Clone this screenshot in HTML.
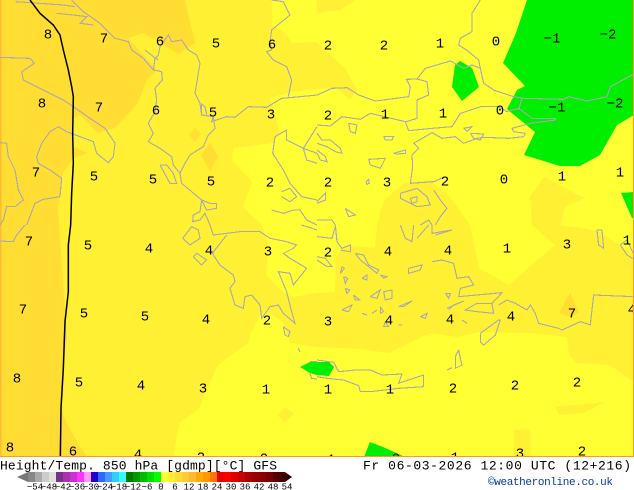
<!DOCTYPE html>
<html><head><meta charset="utf-8"><style>
html,body{margin:0;padding:0;background:#fff;width:634px;height:490px;overflow:hidden}
svg{position:absolute;left:0;top:0}
.c polyline{fill:none;stroke:#a9a9b2;stroke-width:3.3;stroke-linejoin:miter}
.l text{font:14px "Liberation Mono",monospace;text-anchor:middle;fill:#000}
.b text{font:9px "Liberation Mono",monospace;text-anchor:middle;fill:#000}
</style></head><body>
<svg width="634" height="490" viewBox="0 0 634 490" xmlns="http://www.w3.org/2000/svg">
<defs><clipPath id="m"><rect x="0" y="0" width="634" height="457"/></clipPath></defs>
<g clip-path="url(#m)">
<rect width="634" height="457" fill="#ffff33"/>
<polygon fill="#fff033" points="0,0 272,0 272,25 285,33 292,43 317,42 330,55 345,68 357,90 350,100 337,88 317,89 290,92 270,98 280,133 273,143 233,148 232,160 252,182 243,207 262,225 268,245 266,275 283,292 293,297 317,293 335,292 336,258 345,245 375,248 377,225 384,200 405,183 430,180 450,197 470,225 479,268 509,285 555,245 532,225 530,197 544,177 584,198 565,207 560,225 583,228 600,232 634,255 634,382 610,365 577,363 569,355 567,337 530,333 480,332 457,337 430,333 389,353 360,349 317,347 290,343 283,322 270,313 260,315 250,335 248,343 218,365 198,410 180,422 173,457 0,457"/>
<polygon fill="#fff033" points="317,0 355,0 340,10 317,13"/>
<polygon fill="#fff033" points="556,407 604,402 584,413 559,415"/>
<polygon fill="#fff033" points="514,430 529,430 531,457 514,457"/>
<polygon fill="#fff033" points="277,415 285,407 294,414 285,422"/>
<polygon fill="#ffdd33" points="0,0 185,0 195,43 178,54 160,42 143,33 128,38 157,70 147,80 138,103 115,128 98,133 80,115 72,120 74,147 87,153 74,158 63,173 58,207 59,225 62,268 67,338 62,375 61,398 63,415 72,433 82,450 88,457 0,457"/>
<polygon fill="#ffe033" points="189,135 195,128 201,134 195,142"/>
<polygon fill="#ffdd33" points="201,155 210,143 218,157 210,171"/>
<polygon fill="#ffdd33" points="559,313 570,293 579,312 572,317"/>
<rect x="0" y="0" width="1.5" height="457" fill="#ffbb33"/>
<polygon fill="#00ee00" points="527,0 516,33 503,63 525,86 517,90 507,109 535,132 524,155 560,166 580,166 600,155 617,125 634,115 634,0"/>
<polygon fill="#00ee00" points="460,61 472,68 479,87 462,101 452,87 455,65"/>
<polygon fill="#00ee00" points="621,193 634,192 634,218 632,218"/>
<polygon fill="#00ee00" points="300,367 310,362 329,362 334,367 329,376 317,375 310,373"/>
<polygon fill="#00ee00" points="364,457 370,442 383,447 405,457"/>

<g class="c" transform="scale(.33333)" shape-rendering="crispEdges">
<polyline points="47,5 190,15 225,20"/><polyline points="170,40 220,45 260,50 240,70 280,75"/>
<polyline points="0,172 90,175 103,190 65,215 70,240 130,270 190,300 220,320 270,355 315,385 345,430 340,470 325,488 290,460 280,425 240,410 200,395 175,380 150,395 125,430 110,470 115,490 150,510 185,535 180,590 130,598 105,610 80,675"/>
<polyline points="0,428 20,430 25,470 45,510 55,570 70,600 45,620 20,620 10,660 0,675"/>
<polyline points="215,0 250,35 300,70 345,115 385,125 395,150 430,175 460,210 485,215 487,240 465,265 470,300 465,335 445,370 460,400 445,425 480,445 515,470 520,495 540,520 545,550 575,575 605,600 630,610 650,610 650,625 620,630 605,600 600,635 580,645 578,665 600,660 615,640 630,675"/>
<polyline points="480,495 500,495 520,520 530,550 510,550 480,495"/>
<polyline points="460,210 465,175 475,165 480,140 505,105 515,125 545,120 565,150 590,165 600,190 590,250 585,280 600,310 605,345 640,350 635,365 680,350 705,352 745,320 800,322 845,295 900,290 951,285"/>
<polyline points="640,350 645,385 625,405 610,440 570,465 555,490 540,520"/>
<polyline points="605,345 605,312 615,320 620,345"/><polyline points="435,150 460,170 475,180"/>
<polyline points="815,0 850,5 870,45 815,90 810,125 815,150 800,155 820,180 860,200 875,240 865,290"/>
<polyline points="951,380 910,445 951,460"/><polyline points="825,410 860,390 860,420 910,445 920,480 951,490"/>
<polyline points="825,410 818,460 850,510 870,550 905,590 951,600"/>
<polyline points="845,575 870,565 890,590 870,605 845,590"/><polyline points="815,630 850,640 880,630 900,630 920,660 951,675"/>
</g>
<g class="c" transform="translate(317,0) scale(.33333)" shape-rendering="crispEdges">
<polyline points="0,285 45,265 90,263 125,285 175,303 275,290 280,260 268,238 300,237 325,205 400,183 440,205 465,195 490,205 485,180 455,155 425,135 430,115 465,95 465,40 490,0"/>
<polyline points="490,205 500,250 530,270 590,290 620,295 740,298 755,290 810,303 870,290 880,260 951,222"/>
<polyline points="605,330 615,295"/>
<polyline points="0,375 40,378 75,350 130,358 160,340 265,365 275,392 345,385 405,380 430,340 490,320 545,320 570,335 605,325 645,355 715,355 715,360 640,370 585,385 590,395 625,400 620,410 575,415 500,412 480,415 440,430 415,410 375,415 345,398 290,430 305,445 285,465 287,500 280,550 350,545 385,530"/>
<polyline points="268,365 300,355 300,300 335,285 330,245 300,237"/>
<polyline points="350,570 370,600 390,625 370,650 355,675"/>
<polyline points="95,370 120,375 115,400 100,395 95,370"/>
<polyline points="200,410 230,410 225,420 205,420 200,410"/>
<polyline points="440,385 465,380 450,395 440,385"/><polyline points="460,400 500,402 490,420 470,415 460,400"/>
<polyline points="230,460 265,450 265,460 240,462 230,460"/>
<polyline points="155,478 205,475 190,505 160,495 155,478"/>
<polyline points="147,545 155,538 157,550 150,553 147,545"/>
<polyline points="250,580 300,565 330,590 340,615 300,620 250,595 250,580"/>
<polyline points="280,595 300,590 300,605 285,610 280,595"/>
<polyline points="85,625 115,645 95,650 85,625"/><polyline points="0,605 25,580 25,600 0,610"/>
<polyline points="0,660 45,660 55,675"/><polyline points="310,675 335,660 345,675"/>
<polyline points="0,400 15,420 40,420 70,445 75,460 55,455 30,440 0,430"/><polyline points="0,450 25,470 30,485 10,480 0,460"/>
</g>
<g class="c" transform="translate(0,225) scale(.33333)" shape-rendering="crispEdges">
<polyline points="0,48 40,50 50,30 75,0"/>
<polyline points="630,0 640,30 680,25 720,20 780,20 810,40 860,50 890,60 880,70 850,85 870,100 920,130 880,180 870,145 835,140 860,200 875,260 885,295 850,265 835,240 810,245 785,280 780,240 755,210 735,215 730,250 705,240 690,190 705,170 700,150 660,120 637,85 680,30"/>
<polyline points="548,40 575,5 595,15 600,40 570,60 548,40"/><polyline points="580,95 590,85 620,105 605,120 580,95"/>
<polyline points="850,305 870,320 865,335 855,330 850,305"/><polyline points="905,0 951,15"/>
<polyline points="930,410 951,410"/><polyline points="930,445 935,460 951,462"/><polyline points="895,370 900,380"/>
</g>
<g class="c" transform="translate(317,225) scale(.33333)" shape-rendering="crispEdges">
<polyline points="0,35 45,40 55,5"/><polyline points="55,0 60,50 75,70 100,60 100,80 70,75"/><polyline points="0,95 25,100 45,125 30,125 0,105"/>
<polyline points="250,0 265,40 285,50 290,0"/><polyline points="300,40 335,0"/><polyline points="345,0 345,25 405,15 355,30"/>
<polyline points="115,85 140,90 155,120 185,135 180,145 155,125 130,105 115,85"/>
<polyline points="75,125 82,130 70,145 75,125"/><polyline points="80,155 92,160 85,175 80,155"/><polyline points="85,190 98,195 90,205 85,190"/>
<polyline points="110,210 128,225 115,225 110,210"/><polyline points="135,160 150,150 150,165 135,160"/><polyline points="190,150 210,155 200,160 190,150"/>
<polyline points="275,130 315,120 310,135 275,145 275,130"/><polyline points="160,215 190,195 180,220 160,215"/><polyline points="200,200 225,195 225,220 205,225 200,200"/>
<polyline points="245,245 285,228 260,245 245,245"/><polyline points="75,255 105,240 95,260 75,255"/><polyline points="135,265 150,270"/><polyline points="165,265 180,255"/>
<polyline points="190,245 200,260 190,265 190,245"/><polyline points="205,290 215,305 200,305 205,290"/><polyline points="310,275 330,265 325,280 310,275"/><polyline points="245,300 255,300"/><polyline points="435,285 450,295"/>
<polyline points="345,110 375,105 410,115 420,160 455,155 470,180 430,190 425,215 555,203 525,235 480,235 445,255 480,260 530,265 525,237"/>
<polyline points="385,205 400,205 395,220 385,205"/><polyline points="390,250 440,228 410,240 395,255"/>
<polyline points="545,240 570,225 595,235 630,255 640,240 655,265 665,295 725,310 735,315 790,290 820,300 830,210 951,215"/>
<polyline points="490,325 545,285 550,285 535,330 500,360 490,350 490,325"/>
<polyline points="425,375 430,400 435,420 415,430 415,395 425,375"/><polyline points="390,435 405,428"/>
<polyline points="0,405 50,412 65,440 115,435 160,435 195,450 255,447 245,475 320,450 320,485 245,490 160,500 130,500 125,482 80,465 30,460 0,455"/>
<polyline points="840,15 855,15 860,70 845,60 840,15"/><polyline points="910,60 930,45 951,90 951,103 930,90 910,60"/>
</g>
<g transform="scale(.33333)" fill="none" stroke="#000" stroke-width="4.5">
<polyline points="90,0 120,40 160,75 180,105 190,150 205,210 215,260 220,290 218,400 220,490 215,580 212,675 205,735 205,875 195,965 190,1105 183,1225 181,1371"/>
</g>
<g class="l">
<text x="48" y="38.5">8</text><text x="104" y="42.5">7</text><text x="160" y="45.5">6</text><text x="216" y="47.5">5</text><text x="272" y="48.5">6</text><text x="328" y="49.5">2</text><text x="384" y="49.5">2</text><text x="440" y="47.5">1</text><text x="496" y="45.5">0</text><text x="552" y="42.5">−1</text><text x="608" y="38.5">−2</text>
<text x="42" y="107.5">8</text><text x="99" y="111.5">7</text><text x="156" y="114.5">6</text><text x="213" y="116.5">5</text><text x="271" y="118.5">3</text><text x="328" y="119.5">2</text><text x="385" y="118.5">1</text><text x="443" y="117.5">1</text><text x="500" y="114.5">0</text><text x="557" y="111.5">−1</text><text x="615" y="107.5">−2</text>
<text x="36" y="176.5">7</text><text x="94" y="180.5">5</text><text x="153" y="183.5">5</text><text x="211" y="185.5">5</text><text x="270" y="186.5">2</text><text x="328" y="186.5">2</text><text x="387" y="186.5">3</text><text x="445" y="185.5">2</text><text x="504" y="183.5">0</text><text x="562" y="180.5">1</text><text x="620" y="176.5">1</text>
<text x="29" y="245.5">7</text><text x="88" y="249.5">5</text><text x="149" y="252.5">4</text><text x="209" y="254.5">4</text><text x="268" y="255.5">3</text><text x="328" y="256.5">2</text><text x="388" y="255.5">4</text><text x="448" y="254.5">4</text><text x="507" y="252.5">1</text><text x="567" y="248.5">3</text><text x="627" y="244.5">1</text>
<text x="23" y="313.5">7</text><text x="84" y="317.5">5</text><text x="145" y="320.5">5</text><text x="206" y="323.5">4</text><text x="267" y="324.5">2</text><text x="328" y="325.5">3</text><text x="389" y="324.5">4</text><text x="450" y="323.5">4</text><text x="511" y="320.5">4</text><text x="572" y="317.5">7</text><text x="632" y="313.5">4</text>
<text x="17" y="382.5">8</text><text x="79" y="386.5">5</text><text x="141" y="389.5">4</text><text x="203" y="392.5">3</text><text x="266" y="393.5">1</text><text x="328" y="393.5">1</text><text x="390" y="393.5">1</text><text x="453" y="392.5">2</text><text x="515" y="389.5">2</text><text x="577" y="386.5">2</text>
<text x="10" y="451.5">8</text><text x="73" y="455.5">6</text><text x="138" y="458.5">4</text><text x="201" y="461.5">2</text><text x="264" y="462.5">0</text><text x="327" y="463.5">−1</text><text x="396" y="462.5">0</text><text x="455" y="461.5">1</text><text x="520" y="457.5">3</text><text x="582" y="455.5">2</text>
</g>
</g>
<rect x="0" y="456" width="634" height="1" fill="#ff9922"/>
<rect x="633" y="0" width="1" height="457" fill="#ff9922"/>

<text x="0" y="469.5" font-family="Liberation Mono" font-size="13" textLength="277" lengthAdjust="spacing" fill="#000">Height/Temp. 850 hPa [gdmp][°C] GFS</text>
<text x="363" y="469.5" font-family="Liberation Mono" font-size="13" textLength="268" lengthAdjust="spacing" fill="#000">Fr 06-03-2026 12:00 UTC (12+216)</text>
<text x="488" y="485" font-family="Liberation Mono" font-size="11" textLength="125" lengthAdjust="spacing" fill="#0a3a9a">©weatheronline.co.uk</text>

<polygon points="17,477 28,472 28,482" fill="#777"/>
<g shape-rendering="crispEdges">
<rect x="28" y="472" width="7" height="10" fill="#888"/><rect x="35" y="472" width="7" height="10" fill="#aaa"/><rect x="42" y="472" width="7" height="10" fill="#ccc"/><rect x="49" y="472" width="7" height="10" fill="#e0e0e0"/>
<rect x="56" y="472" width="7" height="10" fill="#773388"/><rect x="63" y="472" width="7" height="10" fill="#aa33aa"/><rect x="70" y="472" width="7" height="10" fill="#cc33cc"/><rect x="77" y="472" width="7" height="10" fill="#ff33ff"/><rect x="84" y="472" width="7" height="10" fill="#ff99ff"/>
<rect x="91" y="472" width="7" height="10" fill="#2200cc"/><rect x="98" y="472" width="7" height="10" fill="#3366ff"/><rect x="105" y="472" width="7" height="10" fill="#4499ff"/><rect x="112" y="472" width="7" height="10" fill="#33ccff"/><rect x="119" y="472" width="7" height="10" fill="#33ffff"/>
<rect x="126" y="472" width="7" height="10" fill="#007700"/><rect x="133" y="472" width="7" height="10" fill="#009900"/><rect x="140" y="472" width="7" height="10" fill="#00bb00"/><rect x="147" y="472" width="7" height="10" fill="#00dd00"/><rect x="154" y="472" width="7" height="10" fill="#00ff00"/>
<rect x="161" y="472" width="7" height="10" fill="#ffff33"/><rect x="168" y="472" width="7" height="10" fill="#ffee33"/><rect x="175" y="472" width="7" height="10" fill="#ffdd33"/><rect x="182" y="472" width="7" height="10" fill="#ffcc33"/><rect x="189" y="472" width="7" height="10" fill="#ffbb33"/><rect x="196" y="472" width="7" height="10" fill="#ffaa00"/><rect x="203" y="472" width="7" height="10" fill="#ff9900"/><rect x="210" y="472" width="7" height="10" fill="#ff7700"/>
<rect x="217" y="472" width="7" height="10" fill="#ee0000"/><rect x="224" y="472" width="7" height="10" fill="#ff0000"/><rect x="231" y="472" width="7" height="10" fill="#dd0000"/><rect x="238" y="472" width="7" height="10" fill="#cc0000"/><rect x="245" y="472" width="7" height="10" fill="#aa0000"/><rect x="252" y="472" width="7" height="10" fill="#990000"/><rect x="259" y="472" width="7" height="10" fill="#880000"/><rect x="266" y="472" width="7" height="10" fill="#770000"/><rect x="273" y="472" width="7" height="10" fill="#550000"/><rect x="280" y="472" width="5" height="10" fill="#440000"/>
</g>
<polygon points="285,472 292,477 285,482" fill="#330000"/>
<g class="b">
<text x="35" y="489.5">−54</text><text x="49" y="489.5">−48</text><text x="63" y="489.5">−42</text><text x="77" y="489.5">−36</text><text x="91" y="489.5">−30</text><text x="105" y="489.5">−24</text><text x="119" y="489.5">−18</text><text x="133" y="489.5">−12</text><text x="147" y="489.5">−6</text><text x="161" y="489.5">0</text><text x="175" y="489.5">6</text><text x="189" y="489.5">12</text><text x="203" y="489.5">18</text><text x="217" y="489.5">24</text><text x="231" y="489.5">30</text><text x="245" y="489.5">36</text><text x="259" y="489.5">42</text><text x="273" y="489.5">48</text><text x="287" y="489.5">54</text>
</g>
</svg>
</body></html>
